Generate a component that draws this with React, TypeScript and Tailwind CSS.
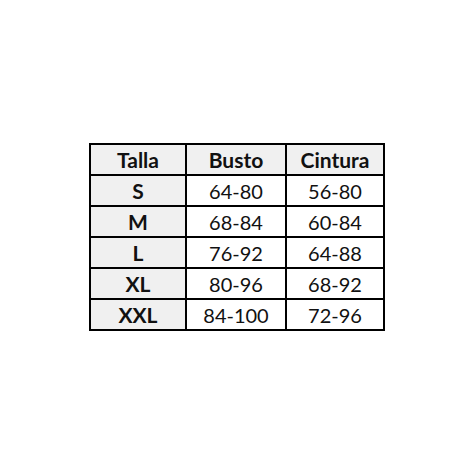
import React from 'react';

const rows = [
    { size: 'S', busto: '64-80', cintura: '56-80' },
    { size: 'M', busto: '68-84', cintura: '60-84' },
    { size: 'L', busto: '76-92', cintura: '64-88' },
    { size: 'XL', busto: '80-96', cintura: '68-92' },
    { size: 'XXL', busto: '84-100', cintura: '72-96' },
];

const Cell: React.FC<{ children: React.ReactNode; head?: boolean }> = ({ children, head }) => (
    <div className={`flex items-center justify-center h-[29px] leading-none text-[#111] ${head ? 'bg-[#f0f0f0] font-bold text-[21px]' : 'bg-white text-[20px]'}`}>
        {children}
    </div>
);

const App: React.FC = () => {
    return (
        <div className="w-full h-screen bg-white flex items-center justify-center" style={{ fontFamily: 'Lato, "Open Sans", sans-serif' }}>
            <div className="grid grid-cols-[94px_98px_96px] gap-[2px] p-[2px] bg-black">
                <Cell head>Talla</Cell>
                <Cell head>Busto</Cell>
                <Cell head>Cintura</Cell>
                {rows.map(r => (
                    <React.Fragment key={r.size}>
                        <Cell head>{r.size}</Cell>
                        <Cell>{r.busto}</Cell>
                        <Cell>{r.cintura}</Cell>
                    </React.Fragment>
                ))}
            </div>
        </div>
    );
};

export default App;
